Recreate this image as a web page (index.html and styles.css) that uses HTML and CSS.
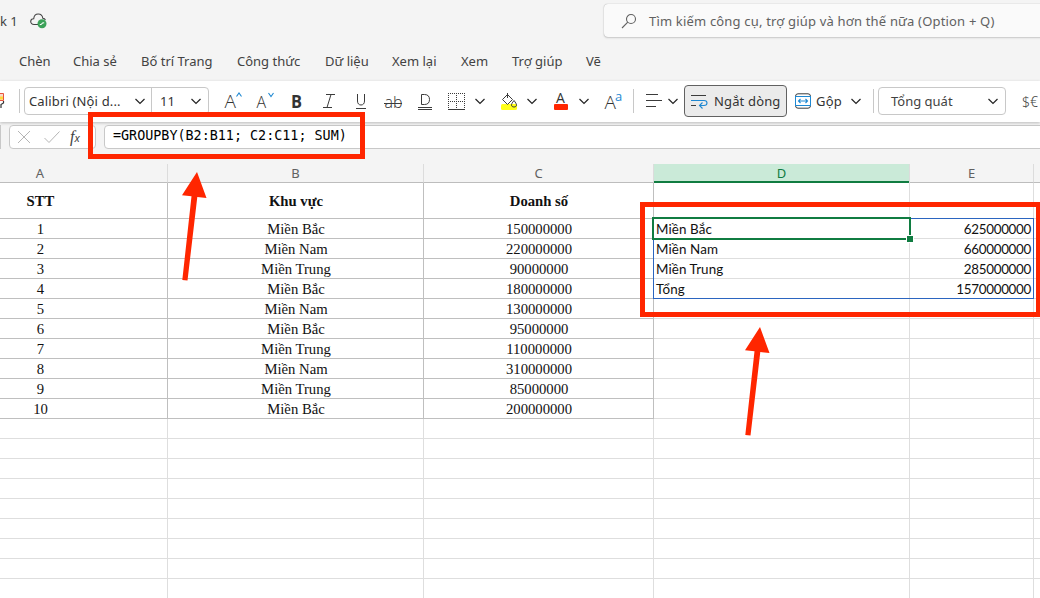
FILE: index.html
```html
<!DOCTYPE html>
<html lang="vi">
<head>
    <meta charset="UTF-8">
    <meta name="viewport" content="width=device-width, initial-scale=1.0">
    <title>GROUPBY</title>
    <link rel="stylesheet" href="styles.css">
</head>
<body>
<svg class="defs">
    <symbol id="chevron" viewBox="0 0 14 14"><path d="M2.5 5 L7 9.5 L11.5 5" fill="none" stroke="#242424" stroke-width="1.2"/></symbol>
</svg>

<!-- Title bar -->
<header class="titlebar">
    <span class="doc-name">k 1</span>
    <svg class="cloud" width="18" height="16" viewBox="0 0 18 16">
        <path d="M8 11.5 H4 C2 11.5 .7 10.2 .7 8.6 C.7 7 2 5.700 3.700 5.700 C4 3 5.600 1 8.200 1 C10.800 1 12.500 2.800 12.800 5.200 C14.200 5.300 15 6 15.400 7" fill="none" stroke="#424242" stroke-width="1.1"/>
        <circle cx="12" cy="10.800" r="4.500" fill="#3ba158"/>
        <path d="M9.800 11.600 L11.300 11.300 L12.600 9.900 L14.200 9.700" fill="none" stroke="#fff" stroke-width="1.100"/>
    </svg>
    <div class="search">
        <svg width="16" height="16" viewBox="0 0 16 16">
            <circle cx="10" cy="6" r="4.500" fill="none" stroke="#616161" stroke-width="1.100"/>
            <path d="M6.800 9.200 L1 15" stroke="#616161" stroke-width="1.100"/>
        </svg>
        <span>Tìm kiếm công cụ, trợ giúp và hơn thế nữa (Option + Q)</span>
    </div>
</header>

<!-- Ribbon tabs -->
<nav class="tabs">
    <span>Chèn</span>
    <span>Chia sẻ</span>
    <span>Bố trí Trang</span>
    <span>Công thức</span>
    <span>Dữ liệu</span>
    <span>Xem lại</span>
    <span>Xem</span>
    <span>Trợ giúp</span>
    <span>Vẽ</span>
</nav>

<!-- Toolbar -->
<div class="toolbar">
    <svg class="brush" width="6" height="20" viewBox="0 0 6 20">
        <rect x="0" y="2" width="3.500" height="8" fill="#fbd9c8"/>
        <rect x="0" y="5.500" width="3" height="3" fill="#ffd93b"/>
        <path d="M0 2.500 H3.500 V9.500 H0" fill="none" stroke="#e8543f"/>
        <path d="M3.500 10 V12 L1 13.500 V17" fill="none" stroke="#333" stroke-width="1.200"/>
    </svg>
    <i class="sep"></i>
    <div class="font-box">
        <span class="font-name">Calibri (Nội d...</span>
        <svg class="chev"><use href="#chevron"/></svg>
        <span class="font-size">11</span>
        <svg class="chev"><use href="#chevron"/></svg>
    </div>
    <svg class="tool" viewBox="0 0 32 32">
        <text x="7.500" y="23" class="glyph" font-size="19">A</text>
        <path d="M19.500 11.500 L22 8 L24.500 11.500" class="blue"/>
    </svg>
    <svg class="tool" viewBox="0 0 32 32">
        <text x="7.500" y="23" class="glyph" font-size="16">A</text>
        <path d="M19.500 8 L22 11.500 L24.500 8" class="blue"/>
    </svg>
    <svg class="tool" viewBox="0 0 32 32"><text x="10" y="23" class="glyph bold" font-size="18" textLength="11" lengthAdjust="spacingAndGlyphs">B</text></svg>
    <svg class="tool" viewBox="0 0 32 32"><path d="M13 9.500 H22 M10 22.500 H19 M18 9.500 L14 22.500" class="line"/></svg>
    <svg class="tool" viewBox="0 0 32 32"><path d="M12.500 9 V16 C12.500 18.700 14 20 16 20 C18 20 19.500 18.700 19.500 16 V9 M11 23.500 H21" class="line"/></svg>
    <svg class="tool" viewBox="0 0 32 32">
        <text x="7.500" y="23" class="glyph" font-size="16">ab</text>
        <path d="M7 18.500 H25" class="line"/>
    </svg>
    <svg class="tool" viewBox="0 0 32 32"><path d="M12.500 9.500 V19.500 H15.500 C19 19.500 20.500 17.500 20.500 14.500 C20.500 11.500 19 9.500 15.500 9.500 Z M9 22.500 H23 M9 24.500 H23" class="line"/></svg>
    <svg class="tool borders" viewBox="0 0 32 32">
        <path d="M7 8.500 H24 M7 16.500 H24 M7.500 8 V23 M15.500 8 V23 M23.500 8 V23" class="line dots"/>
        <path d="M7 24.500 H24" class="line"/>
    </svg>
    <svg class="chev"><use href="#chevron"/></svg>
    <svg class="tool fill" viewBox="0 0 32 32">
        <rect x="8" y="19" width="16" height="6" rx="1.500" fill="#ffff1a"/>
        <path d="M14.500 8 V13 M14.500 9.500 L9.500 14.500 L14.500 19.500 L19.500 14.500 L14 9" class="line"/>
        <path d="M21 15.500 C19 18 18.500 19 18.500 20 C18.500 21.300 19.500 22 21 22 C22.500 22 23.500 21.300 23.500 20 C23.500 19 22.500 17.500 21 15.500 Z" class="line"/>
    </svg>
    <svg class="chev"><use href="#chevron"/></svg>
    <svg class="tool font-color" viewBox="0 0 32 32">
        <text x="11" y="18" class="glyph dark" font-size="14">A</text>
        <rect x="9" y="19" width="14" height="6" rx="1" fill="#ff2600"/>
    </svg>
    <svg class="chev"><use href="#chevron"/></svg>
    <svg class="tool aa" viewBox="0 0 32 32">
        <text x="7.500" y="24" class="glyph" font-size="19">A</text>
        <text x="18" y="16" class="glyph small-a" font-size="13">a</text>
    </svg>
    <i class="sep sep-align"></i>
    <svg class="align" width="16" height="16" viewBox="0 0 16 16"><path d="M0 1.500 H12 M0 7.500 H16 M0 13.500 H10" class="line"/></svg>
    <svg class="chev"><use href="#chevron"/></svg>
    <div class="wrap-btn">
        <svg width="17" height="16" viewBox="0 0 17 16">
            <path d="M0 2.500 H15 M0 12.500 H5" class="line"/>
            <path d="M0 7.500 H13 C17 7.500 17 12.500 13 12.500 H9 M11.500 9.500 L8.500 12.500 L11.500 15.500" class="blue"/>
        </svg>
        <span>Ngắt dòng</span>
    </div>
    <svg class="merge" width="16" height="16" viewBox="0 0 16 16">
        <rect x=".5" y=".8" width="15" height="14.400" rx="2.500" class="line"/>
        <rect x=".5" y="3.500" width="15" height="9" fill="#fff" stroke="#1e88d2"/>
        <path d="M3.500 8 H12.500 M5.500 6 L3.500 8 L5.500 10 M10.500 6 L12.500 8 L10.500 10" class="blue"/>
    </svg>
    <span class="merge-label">Gộp</span>
    <svg class="chev"><use href="#chevron"/></svg>
    <i class="sep sep-number"></i>
    <div class="number-box">
        <span>Tổng quát</span>
        <svg class="chev"><use href="#chevron"/></svg>
    </div>
    <span class="currency">$€</span>
</div>

<!-- Formula bar -->
<div class="formula-bar">
    <div class="name-box"></div>
    <div class="fx-box">
        <svg width="14" height="14" viewBox="0 0 14 14"><path d="M1 1 L13 13 M13 1 L1 13" class="muted"/></svg>
        <svg width="16" height="14" viewBox="0 0 16 14"><path d="M.5 8 L5 12.500 L15.500 1.500" class="muted"/></svg>
        <span class="fx">f<small>x</small></span>
    </div>
    <div class="formula">=GROUPBY(B2:B11; C2:C11; SUM)</div>
</div>

<!-- Sheet -->
<table class="sheet">
    <colgroup>
        <col class="col-a"><col class="col-b"><col class="col-c"><col class="col-d"><col class="col-e"><col>
    </colgroup>
    <thead>
        <tr><th>A</th><th>B</th><th>C</th><th class="active">D</th><th>E</th><th></th></tr>
    </thead>
    <tbody>
        <tr class="head data"><td>STT</td><td>Khu vực</td><td>Doanh số</td><td></td><td></td><td></td></tr>
        <tr class="data"><td>1</td><td>Miền Bắc</td><td>150000000</td><td class="origin">Miền Bắc<div class="spill"></div><div class="selection"></div></td><td>625000000</td><td></td></tr>
        <tr class="data"><td>2</td><td>Miền Nam</td><td>220000000</td><td>Miền Nam</td><td>660000000</td><td></td></tr>
        <tr class="data"><td>3</td><td>Miền Trung</td><td>90000000</td><td>Miền Trung</td><td>285000000</td><td></td></tr>
        <tr class="data"><td>4</td><td>Miền Bắc</td><td>180000000</td><td>Tổng</td><td>1570000000</td><td></td></tr>
        <tr class="data"><td>5</td><td>Miền Nam</td><td>130000000</td><td></td><td></td><td></td></tr>
        <tr class="data"><td>6</td><td>Miền Bắc</td><td>95000000</td><td></td><td></td><td></td></tr>
        <tr class="data"><td>7</td><td>Miền Trung</td><td>110000000</td><td></td><td></td><td></td></tr>
        <tr class="data"><td>8</td><td>Miền Nam</td><td>310000000</td><td></td><td></td><td></td></tr>
        <tr class="data"><td>9</td><td>Miền Trung</td><td>85000000</td><td></td><td></td><td></td></tr>
        <tr class="data"><td>10</td><td>Miền Bắc</td><td>200000000</td><td></td><td></td><td></td></tr>
        <tr><td></td><td></td><td></td><td></td><td></td><td></td></tr>
        <tr><td></td><td></td><td></td><td></td><td></td><td></td></tr>
        <tr><td></td><td></td><td></td><td></td><td></td><td></td></tr>
        <tr><td></td><td></td><td></td><td></td><td></td><td></td></tr>
        <tr><td></td><td></td><td></td><td></td><td></td><td></td></tr>
        <tr><td></td><td></td><td></td><td></td><td></td><td></td></tr>
        <tr><td></td><td></td><td></td><td></td><td></td><td></td></tr>
        <tr><td></td><td></td><td></td><td></td><td></td><td></td></tr>
        <tr><td></td><td></td><td></td><td></td><td></td><td></td></tr>
    </tbody>
</table>

<!-- Red notes over the sheet -->
<div class="mark mark-formula"></div>
<div class="mark mark-result"></div>
<svg class="arrow arrow-formula" viewBox="0 0 26 110"><path d="M15 0 L24.500 26 L15.300 25 L5.500 108.500 L.3 108 L9.500 24.300 L0 23.200 Z"/></svg>
<svg class="arrow arrow-result" viewBox="0 0 26 110"><path d="M15 0 L24.500 26 L15.300 25 L5.500 108.500 L.3 108 L9.500 24.300 L0 23.200 Z"/></svg>
</body>
</html>
```
FILE: styles.css
```css
* {
    box-sizing: border-box;
}
body {
    margin: 0;
    width: 1040px;
    height: 598px;
    overflow: hidden;
    position: relative;
    background: #f4f4f4;
    font-family: "Noto Sans", sans-serif;
    font-size: 13px;
    color: #424242;
    white-space: nowrap;
}
svg {
    display: block;
    flex: none;
}
.defs {
    display: none;
}
.line {
    fill: none;
    stroke: #3b3b3b;
}
.blue {
    fill: none;
    stroke: #1e88d2;
    stroke-width: 1.1;
}
.muted {
    fill: none;
    stroke: #b5b5b5;
}
.dots {
    stroke-dasharray: 1 1;
}
.glyph {
    font-family: "Open Sans", sans-serif;
    font-weight: 300;
    fill: #333;
}
.bold {
    font-weight: 700;
}
.dark {
    font-weight: 400;
}
.small-a {
    font-weight: 400;
    fill: #1e88d2;
}
.chev {
    width: 14px;
    height: 14px;
}

/* title bar */
.titlebar {
    display: flex;
    height: 42px;
}
.doc-name {
    width: 30px;
    flex: none;
    line-height: 42px;
}
.cloud {
    margin-top: 13px;
}
.search {
    display: flex;
    align-items: center;
    gap: 12px;
    width: 450px;
    height: 33px;
    margin: 4px 0 0 556px;
    padding-left: 17px;
    background: #fafafa;
    border-radius: 4px;
    box-shadow: 0 0 1px #999, 0 1px 2px #ccc;
    color: #616161;
    letter-spacing: 0.18px;
    flex: none;
}

/* tabs */
.tabs {
    display: grid;
    grid-template-columns: 54px 68px 96px 88px 67px 69px 51px 74px 40px;
    height: 39px;
    padding-left: 19px;
    line-height: 39px;
}

/* toolbar */
.toolbar {
    display: flex;
    align-items: center;
    height: 41px;
    padding-bottom: 1px;
    background: #fff;
    box-shadow: 0 1px 3px #bbb;
    position: relative;
}
.tool {
    width: 32px;
    height: 32px;
}
.sep {
    width: 1px;
    height: 24px;
    margin: 0 4px 0 13px;
    background: #c8c8c8;
    flex: none;
}
.font-box {
    display: flex;
    align-items: center;
    flex: none;
    width: 185px;
    height: 28px;
    margin-right: 8px;
    padding-left: 4px;
    border: 1px solid #c8c8c8;
    border-radius: 4px;
    color: #333;
}
.font-name {
    width: 104px;
    letter-spacing: 0.15px;
}
.font-size {
    width: 38px;
    height: 26px;
    margin-left: 4px;
    padding-left: 8px;
    line-height: 26px;
    border-left: 1px solid #c8c8c8;
}
.borders + .chev {
    margin-right: 6px;
}
.fill + .chev {
    margin-right: 6px;
}
.font-color + .chev {
    margin-right: 6px;
}
.sep-align {
    margin: 0 12px 0 4px;
}
.align + .chev {
    margin: 0 4px;
}
.wrap-btn {
    display: flex;
    align-items: center;
    flex: none;
    gap: 6px;
    width: 103px;
    height: 32px;
    margin-right: 8px;
    padding-left: 6px;
    background: #ebebeb;
    border: 1px solid #616161;
    border-radius: 4px;
    color: #333;
    letter-spacing: 0.15px;
}
.merge-label {
    width: 33px;
    flex: none;
    margin-left: 5px;
    color: #333;
    letter-spacing: 0.2px;
}
.sep-number {
    margin: 0 4px 0 10px;
}
.number-box {
    display: flex;
    align-items: center;
    justify-content: space-between;
    flex: none;
    width: 128px;
    height: 28px;
    padding: 0 5px 0 12px;
    border: 1px solid #c8c8c8;
    border-radius: 4px;
}
.currency {
    margin-left: 16px;
    font-size: 14px;
    font-weight: 300;
}

/* formula bar */
.formula-bar {
    display: flex;
    height: 42px;
    padding-top: 3px;
}
.name-box {
    width: 1px;
    height: 24px;
    background: #c8c8c8;
    flex: none;
}
.fx-box {
    display: flex;
    align-items: center;
    flex: none;
    width: 87px;
    height: 24px;
    margin: 0 8px;
    padding-left: 7px;
    gap: 13px;
    background: #fff;
    border: 1px solid #c8c8c8;
    border-radius: 4px;
}
.fx {
    margin-left: -3px;
    font-family: "Liberation Serif", serif;
    font-style: italic;
    font-size: 16px;
    line-height: 20px;
}
.fx small {
    font-family: "Noto Sans", sans-serif;
    font-size: 11px;
}
.formula {
    width: 950px;
    height: 24px;
    padding-left: 8px;
    flex: none;
    background: #fff;
    border: 1px solid #c8c8c8;
    border-radius: 4px;
    font-family: "DejaVu Sans Mono", monospace;
    font-size: 13.4px;
    line-height: 20px;
    color: #000;
}

/* sheet */
.sheet {
    width: 1040px;
    table-layout: fixed;
    border-spacing: 0;
    color: #111;
}
.col-a { width: 168px; }
.col-b { width: 256px; }
.col-c { width: 230px; }
.col-d { width: 256px; }
.col-e { width: 124px; }
.sheet th {
    height: 19px;
    padding: 0;
    border-right: 1px solid #dcdcdc;
    border-bottom: 1px solid #bdbdbd;
    font-weight: 400;
    line-height: 18px;
    color: #616161;
}
.sheet th:first-child, .sheet td:first-child {
    padding-right: 87px;
}
.sheet th:last-child, .sheet td:last-child {
    border-right: 0;
}
.sheet th.active {
    background: #caead8;
    color: #107c41;
    border-bottom: 0;
    padding-bottom: 1px;
    box-shadow: inset 0 -2px #107c41;
}
.sheet td {
    height: 20px;
    padding: 1px 0 0 1px;
    background: #fff;
    border-right: 1px solid #dedede;
    border-bottom: 1px solid #dedede;
    font-family: "Liberation Serif", serif;
    font-size: 14.7px;
    line-height: 18px;
    text-align: center;
}
.data td:nth-child(-n+3) {
    border-color: #bfbfbf;
}
.head td {
    height: 36px;
    padding-top: 0;
    font-weight: 700;
}
.sheet td:nth-child(4), .sheet td:nth-child(5) {
    padding: 1px 2px 0;
    font-family: Lato, sans-serif;
    font-size: 13.4px;
    letter-spacing: 0.1px;
    text-align: left;
}
.sheet td:nth-child(5) {
    letter-spacing: -0.3px;
    text-align: right;
}
.sheet .origin {
    position: relative;
}
.spill {
    position: absolute;
    left: -1px;
    top: -1px;
    width: 381px;
    height: 81px;
    border: 1px solid #2b65c0;
}
.selection {
    position: absolute;
    left: -2px;
    top: -2px;
    width: 259px;
    height: 23px;
    border: 2px solid #107c41;
}
.selection::after {
    content: "";
    position: absolute;
    right: -5px;
    bottom: -5px;
    width: 6px;
    height: 6px;
    background: #107c41;
    border: 1px solid #fff;
}

/* red notes */
.mark {
    position: absolute;
    border: 5px solid #ff2600;
}
.mark-formula {
    left: 88px;
    top: 112px;
    width: 277px;
    height: 47px;
}
.mark-result {
    left: 640px;
    top: 202px;
    width: 401px;
    height: 115px;
}
.arrow {
    position: absolute;
    width: 26px;
    height: 110px;
    fill: #ff2600;
}
.arrow-formula {
    left: 182px;
    top: 172px;
}
.arrow-result {
    left: 745px;
    top: 327px;
}
```
